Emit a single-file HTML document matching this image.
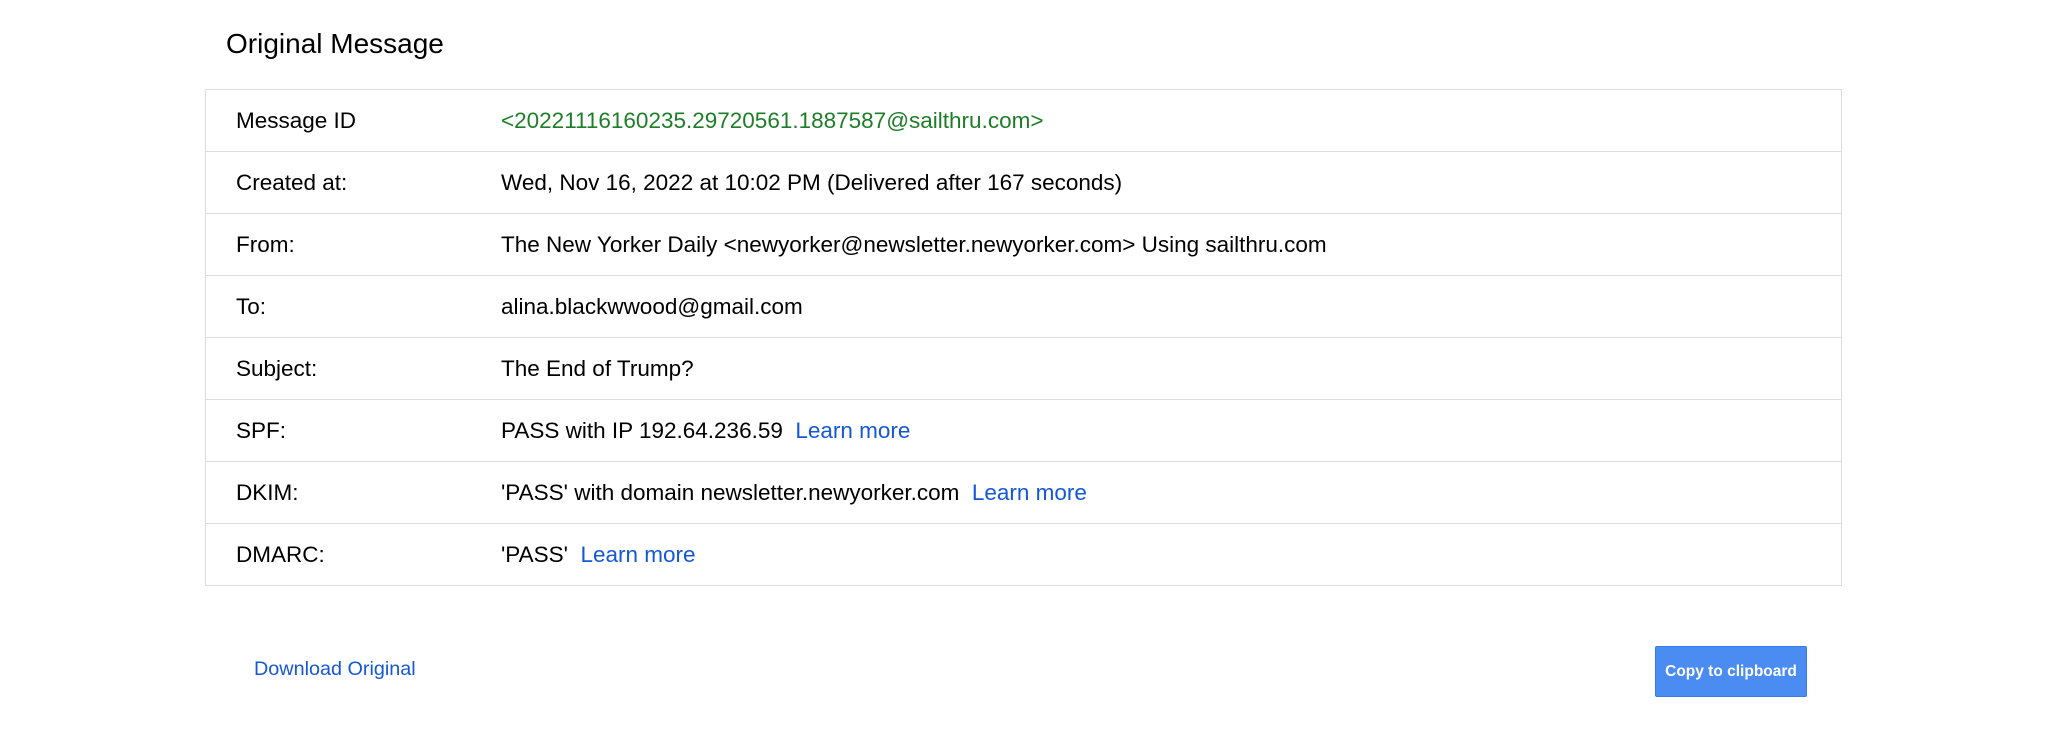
<!DOCTYPE html>
<html><head><meta charset="utf-8"><style>
body{margin:0;width:2048px;height:747px;background:#fff;font-family:"Liberation Sans",Arial,sans-serif;color:#000;position:relative;overflow:hidden}
h1{position:absolute;left:226px;top:28px;margin:0;font-size:28px;font-weight:normal}
table{position:absolute;left:205px;top:89px;width:1637px;border-collapse:collapse;border:1px solid #dadce0}
td{height:61px;border-bottom:1px solid #dadce0;font-size:22.5px;padding:0;vertical-align:middle}
td.l{width:265px;padding-left:30px}
.g{color:#1e7e28}
a{color:#1558d6;text-decoration:none}
.dl{position:absolute;left:254px;top:658px;font-size:19.8px}
.btn{position:absolute;left:1655px;top:646px;width:152px;height:51px;background:#4a8cf2;border:1px solid #3a7ae8;border-radius:2px;color:#fff;font-weight:bold;font-size:15.5px;display:flex;align-items:center;justify-content:center;box-sizing:border-box}
</style></head><body>
<h1>Original Message</h1>
<table>
<tr><td class="l">Message ID</td><td class="g">&lt;20221116160235.29720561.1887587@sailthru.com&gt;</td></tr>
<tr><td class="l">Created at:</td><td>Wed, Nov 16, 2022 at 10:02 PM (Delivered after 167 seconds)</td></tr>
<tr><td class="l">From:</td><td>The New Yorker Daily &lt;newyorker@newsletter.newyorker.com&gt; Using sailthru.com</td></tr>
<tr><td class="l">To:</td><td>alina.blackwwood@gmail.com</td></tr>
<tr><td class="l">Subject:</td><td>The End of Trump?</td></tr>
<tr><td class="l">SPF:</td><td>PASS with IP 192.64.236.59&nbsp; <a>Learn more</a></td></tr>
<tr><td class="l">DKIM:</td><td>'PASS' with domain newsletter.newyorker.com&nbsp; <a>Learn more</a></td></tr>
<tr><td class="l">DMARC:</td><td>'PASS'&nbsp; <a>Learn more</a></td></tr>
</table>
<a class="dl">Download Original</a>
<div class="btn">Copy to clipboard</div>
</body></html>
